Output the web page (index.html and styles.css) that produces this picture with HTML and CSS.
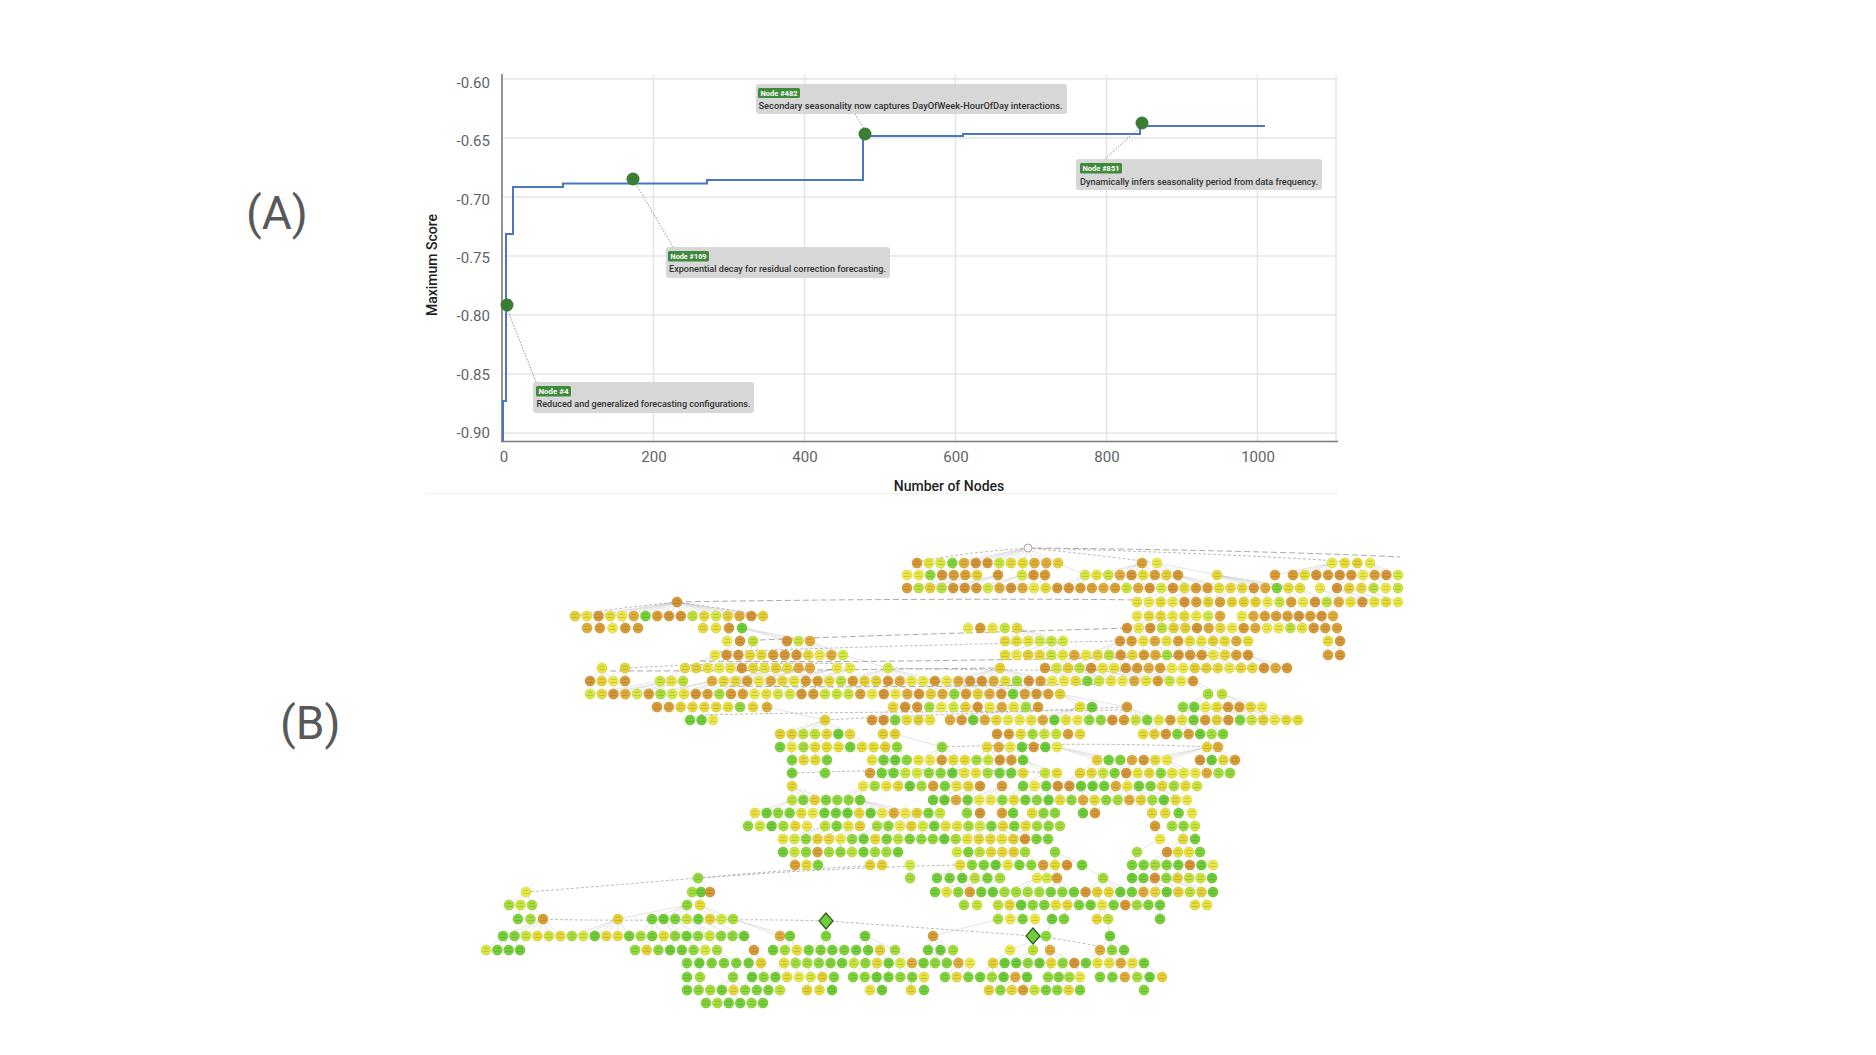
FILE: index.html
```html
<!DOCTYPE html>
<html lang="en">
<head>
<meta charset="utf-8">
<title>Search progress</title>
<link rel="stylesheet" href="styles.css">
</head>
<body>
<main class="figure">
  <section class="panel panel-a">
    <div class="panel-label label-a">(A)</div>
    <svg class="chart" viewBox="420 60 920 440" width="920" height="440" role="img" aria-label="Maximum Score versus Number of Nodes">
      <g class="grid">
        <line x1="502" y1="79" x2="1336" y2="79"/>
        <line x1="502" y1="138" x2="1336" y2="138"/>
        <line x1="502" y1="197" x2="1336" y2="197"/>
        <line x1="502" y1="256" x2="1336" y2="256"/>
        <line x1="502" y1="315" x2="1336" y2="315"/>
        <line x1="502" y1="374" x2="1336" y2="374"/>
        <line x1="502" y1="433" x2="1336" y2="433"/>
        <line x1="653.5" y1="75" x2="653.5" y2="441"/>
        <line x1="804.5" y1="75" x2="804.5" y2="441"/>
        <line x1="955.5" y1="75" x2="955.5" y2="441"/>
        <line x1="1106.5" y1="75" x2="1106.5" y2="441"/>
        <line x1="1257.5" y1="75" x2="1257.5" y2="441"/>
        <line x1="1336" y1="75" x2="1336" y2="441"/>
      </g>
      <line class="axis" x1="502" y1="74" x2="502" y2="442"/>
      <line class="axis" x1="501" y1="441.5" x2="1338" y2="441.5"/>
      <g class="tick ytick">
        <text x="490" y="88">-0.60</text>
        <text x="490" y="145.5">-0.65</text>
        <text x="490" y="204.5">-0.70</text>
        <text x="490" y="262.5">-0.75</text>
        <text x="490" y="321">-0.80</text>
        <text x="490" y="379.5">-0.85</text>
        <text x="490" y="437.5">-0.90</text>
      </g>
      <g class="tick xtick">
        <text x="504" y="462">0</text>
        <text x="654" y="462">200</text>
        <text x="805" y="462">400</text>
        <text x="956" y="462">600</text>
        <text x="1107" y="462">800</text>
        <text x="1258" y="462">1000</text>
      </g>
      <text class="axis-title" x="949" y="491" text-anchor="middle">Number of Nodes</text>
      <text class="axis-title" transform="translate(437 265) rotate(-90)" text-anchor="middle">Maximum Score</text>
      <line class="sep" x1="425" y1="493.5" x2="1338" y2="493.5"/>
      <path class="series" d="M503 441 V401 H506 V234 H513 V187 H563 V183.5 H707 V180 H863 V136 H963 V134 H1140 V126 H1265"/>
      <g class="leaders">
        <line class="leader" x1="508" y1="311" x2="536" y2="382"/>
        <line class="leader" x1="636" y1="184" x2="673" y2="247"/>
        <line class="leader" x1="855" y1="114" x2="864" y2="129"/>
        <line class="leader" x1="1139" y1="128" x2="1105" y2="159"/>
      </g>
      <circle class="milestone" cx="507" cy="305" r="6.5"/>
      <circle class="milestone" cx="633" cy="179" r="6.5"/>
      <circle class="milestone" cx="865" cy="134" r="6.5"/>
      <circle class="milestone" cx="1142" cy="123" r="6.5"/>
      <g class="note">
        <rect class="note-box" x="533" y="382" width="221" height="31" rx="3"/>
        <rect class="badge" x="536" y="386" width="35" height="10.5" rx="1.5"/>
        <text class="badge-text" x="538.5" y="393.8" textLength="30" lengthAdjust="spacingAndGlyphs">Node #4</text>
        <text class="note-text" x="536.5" y="407" textLength="214" lengthAdjust="spacingAndGlyphs">Reduced and generalized forecasting configurations.</text>
      </g>
      <g class="note">
        <rect class="note-box" x="666" y="247" width="224" height="31" rx="3"/>
        <rect class="badge" x="668" y="251" width="41" height="10.5" rx="1.5"/>
        <text class="badge-text" x="670.5" y="258.8" textLength="36" lengthAdjust="spacingAndGlyphs">Node #169</text>
        <text class="note-text" x="669" y="272" textLength="217" lengthAdjust="spacingAndGlyphs">Exponential decay for residual correction forecasting.</text>
      </g>
      <g class="note">
        <rect class="note-box" x="756" y="84" width="311" height="30" rx="3"/>
        <rect class="badge" x="758" y="88" width="42" height="10" rx="1.5"/>
        <text class="badge-text" x="760.5" y="95.6" textLength="37" lengthAdjust="spacingAndGlyphs">Node #482</text>
        <text class="note-text" x="758.5" y="109" textLength="304" lengthAdjust="spacingAndGlyphs">Secondary seasonality now captures DayOfWeek-HourOfDay interactions.</text>
      </g>
      <g class="note">
        <rect class="note-box" x="1076" y="159" width="246" height="31" rx="3"/>
        <rect class="badge" x="1080" y="163" width="42" height="10.5" rx="1.5"/>
        <text class="badge-text" x="1082.5" y="170.8" textLength="37" lengthAdjust="spacingAndGlyphs">Node #851</text>
        <text class="note-text" x="1080" y="185" textLength="238" lengthAdjust="spacingAndGlyphs">Dynamically infers seasonality period from data frequency.</text>
      </g>
    </svg>
  </section>
  <section class="panel panel-b">
    <div class="panel-label label-b">(B)</div>
    <svg id="tree" class="tree" viewBox="470 540 940 480" width="940" height="480" role="img" aria-label="Search tree"></svg>
  </section>
</main>
<script src="script.js"></script>
</body>
</html>
```

FILE: styles.css
```css
html, body {
  margin: 0;
  padding: 0;
  background: #ffffff;
}

body {
  width: 1876px;
  height: 1055px;
  overflow: hidden;
  font-family: Roboto, "Liberation Sans", Arial, sans-serif;
}

.figure {
  display: flex;
  flex-direction: column;
}

.panel {
  display: grid;
  align-items: start;
}

.panel-a {
  grid-template-columns: 420px 920px;
  height: 500px;
}

.panel-b {
  grid-template-columns: 470px 940px;
  height: 555px;
}

.panel-label {
  font-size: 46px;
  line-height: 46px;
  font-weight: 400;
  color: #595959;
}

.label-a {
  padding-left: 246px;
  margin-top: 190px;
}

.label-b {
  padding-left: 280px;
  margin-top: 200px;
}

.chart {
  display: block;
  margin-top: 60px;
  font-family: Roboto, "Liberation Sans", Arial, sans-serif;
}

.chart .grid line {
  stroke: #e4e4e4;
  stroke-width: 1.5;
}

.chart .axis {
  stroke: #7a7a7a;
  stroke-width: 1.6;
}

.chart .tick {
  font-size: 15px;
  fill: #5f6368;
}

.chart .ytick {
  text-anchor: end;
}

.chart .xtick {
  text-anchor: middle;
}

.chart .axis-title {
  font-size: 14px;
  font-weight: 500;
  fill: #1f1f1f;
}

.chart .sep {
  stroke: #f1f1f1;
  stroke-width: 1.5;
}

.chart .series {
  fill: none;
  stroke: #4a76c2;
  stroke-width: 2;
}

.chart .leader {
  stroke: #8a8a8a;
  stroke-width: 0.9;
  stroke-dasharray: 1.5 1.5;
}

.chart .milestone {
  fill: #3b7d33;
}

.chart .note-box {
  fill: #d7d7d7;
}

.chart .badge {
  fill: #3f8b3c;
}

.chart .badge-text {
  font-size: 7.5px;
  font-weight: 700;
  fill: #ffffff;
}

.chart .note-text {
  font-size: 9px;
  font-weight: 500;
  fill: #333333;
}

.tree {
  display: block;
  margin-top: 40px;
}

.tree .edge {
  stroke: #c6c6c6;
  stroke-width: 0.5;
  fill: none;
}

.tree .link {
  stroke: #ababab;
  stroke-width: 0.8;
  stroke-dasharray: 3 2;
  fill: none;
}

.tree .link-dark {
  stroke: #777777;
  stroke-width: 0.9;
  stroke-dasharray: 6 3;
  fill: none;
  opacity: 0.7;
}

.tree .node {
  stroke: rgba(120, 100, 0, 0.18);
  stroke-width: 0.6;
}

.tree .mark {
  fill: rgba(80, 70, 20, 0.26);
}

.tree .diamond {
  fill: #72cc3a;
  stroke: #2f5a22;
  stroke-width: 1.2;
}

.tree .root {
  fill: #f4f4f4;
  stroke: #9a9a9a;
  stroke-width: 0.8;
}
```

FILE: script.js
```js
(function () {
  var NS = 'http://www.w3.org/2000/svg';
  var svg = document.getElementById('tree');
  var PITCH = 11.7;

  var rows = [
    [563, [[917, 1058], [1142, 1157], [1332, 1370]]],
    [575, [[907, 977], [998, 998], [1022, 1045], [1085, 1178], [1217, 1217], [1275, 1275], [1293, 1398]]],
    [588, [[907, 1300], [1320, 1320], [1337, 1398]]],
    [602, [[677, 677], [1137, 1398]]],
    [616, [[575, 763], [1137, 1220], [1242, 1333]]],
    [628, [[587, 638], [703, 742], [968, 1017], [1127, 1337]]],
    [641, [[727, 753], [787, 810], [1005, 1063], [1120, 1248], [1328, 1340]]],
    [655, [[715, 843], [1005, 1248], [1328, 1340]]],
    [668, [[602, 602], [625, 625], [685, 810], [837, 850], [888, 888], [1000, 1000], [1045, 1287]]],
    [681, [[590, 625], [660, 683], [712, 1193]]],
    [694, [[590, 1060], [1208, 1222]]],
    [707, [[657, 740], [753, 767], [893, 1038], [1080, 1092], [1127, 1127], [1183, 1262]]],
    [720, [[690, 713], [825, 825], [872, 930], [950, 1298]]],
    [734, [[780, 850], [883, 895], [997, 1080], [1143, 1223]]],
    [747, [[780, 897], [942, 942], [987, 1057], [1207, 1218]]],
    [760, [[792, 827], [872, 1023], [1097, 1167], [1200, 1235]]],
    [773, [[792, 792], [825, 825], [870, 1023], [1045, 1057], [1080, 1230]]],
    [786, [[792, 792], [863, 980], [1002, 1002], [1023, 1197]]],
    [800, [[792, 860], [933, 1187]]],
    [813, [[755, 940], [967, 980], [1002, 1013], [1032, 1055], [1083, 1095], [1152, 1192]]],
    [826, [[748, 807], [825, 860], [877, 1060], [1155, 1155], [1172, 1195]]],
    [839, [[783, 1048], [1160, 1160], [1183, 1195]]],
    [852, [[783, 898], [957, 1025], [1055, 1055], [1137, 1137], [1167, 1200]]],
    [865, [[795, 818], [870, 882], [910, 910], [960, 1067], [1082, 1082], [1132, 1213]]],
    [878, [[698, 698], [910, 910], [937, 1000], [1037, 1057], [1103, 1103], [1132, 1212]]],
    [892, [[526, 526], [692, 710], [935, 1213]]],
    [905, [[509, 532], [687, 700], [964, 977], [998, 1160], [1195, 1207]]],
    [919, [[518, 543], [618, 618], [652, 733], [998, 1035], [1052, 1064], [1097, 1108], [1160, 1160]]],
    [936, [[503, 744], [780, 790], [826, 826], [865, 865], [933, 933], [1046, 1046], [1110, 1110]]],
    [950, [[486, 520], [635, 717], [754, 754], [773, 880], [895, 895], [928, 953], [1010, 1010], [1033, 1033], [1050, 1050], [1100, 1124]]],
    [963, [[687, 761], [784, 970], [993, 1144]]],
    [977, [[687, 700], [733, 733], [752, 834], [853, 924], [945, 1027], [1048, 1080], [1100, 1162]]],
    [990, [[687, 780], [807, 832], [870, 882], [911, 924], [989, 1080], [1144, 1144]]],
    [1003, [[706, 763]]]
  ];

  var longLinks = [
    ['link-dark', 'M1028 548 C1150 549 1300 552 1400 557'],
    ['link', 'M1028 548 C985 551 945 556 917 562'],
    ['link', 'M1028 548 C1080 553 1120 558 1150 562'],
    ['link', 'M1028 548 C1180 552 1300 558 1350 562'],
    ['link-dark', 'M677 602 C780 600 1000 598 1140 600'],
    ['link', 'M677 602 C640 606 600 610 575 616'],
    ['link', 'M677 602 C700 606 740 610 763 616'],
    ['link-dark', 'M760 640 C850 636 1000 632 1130 628'],
    ['link', 'M720 652 C820 648 960 644 1120 641'],
    ['link-dark', 'M700 661 C850 663 1000 660 1240 655'],
    ['link', 'M625 668 C700 664 780 662 850 664'],
    ['link-dark', 'M610 671 C760 671 900 669 1000 668'],
    ['link', 'M890 668 C980 670 1100 672 1287 668'],
    ['link-dark', 'M720 686 C850 688 980 686 1100 684'],
    ['link', 'M700 715 C820 712 940 712 1130 710'],
    ['link', 'M826 720 C900 716 1000 712 1127 707'],
    ['link', 'M942 747 C1000 745 1100 742 1210 747'],
    ['link', 'M792 773 C880 770 980 768 1050 773'],
    ['link', 'M698 878 C760 872 820 868 868 866'],
    ['link', 'M526 892 C580 888 650 882 698 878'],
    ['link', 'M826 921 C900 926 980 932 1033 936'],
    ['link', 'M540 919 C620 922 740 918 826 921'],
    ['link', 'M1033 936 C1070 940 1100 946 1112 950'],
    ['link', 'M702 878 C800 870 900 866 960 865']
  ];

  var seed = 1234567;
  function rnd() {
    seed = (seed * 16807) % 2147483647;
    return (seed - 1) / 2147483646;
  }
  function choose(list) {
    return list[Math.floor(rnd() * list.length)];
  }

  var GREENS = ['#7ed63c', '#6ccf3a', '#8fdb3e', '#a5e03e', '#74d23b'];
  var ORANGES = ['#dca23a', '#d8993a', '#e1ad3e', '#da9e36', '#d69538'];
  var YELLOWS = ['#e6df38', '#ece94a', '#e6d236', '#e9e43f', '#e8da3c'];
  var YGS = ['#cbe63e', '#bfe23d', '#d6ea45'];

  function pick(x, y) {
    var g;
    if (y < 690) g = 0.03;
    else if (y < 760) g = 0.12 + (y - 690) / 70 * 0.2;
    else if (y < 860) g = 0.4 + (y - 760) / 100 * 0.15;
    else g = 0.62;
    if (x < 770 && y > 860) g = 0.72;
    if (rnd() < g) return choose(GREENS);
    var o = y < 600 ? 0.5 : (y < 700 ? 0.42 : (y < 800 ? 0.33 : 0.22));
    var r2 = rnd();
    if (r2 < o) return choose(ORANGES);
    if (r2 < o + (1 - o) * 0.75) return choose(YELLOWS);
    return choose(YGS);
  }

  function el(name, attrs, parent) {
    var e = document.createElementNS(NS, name);
    for (var k in attrs) e.setAttribute(k, attrs[k]);
    parent.appendChild(e);
    return e;
  }

  var gEdges = el('g', { 'class': 'edges' }, svg);
  var gLinks = el('g', { 'class': 'links' }, svg);
  var gNodes = el('g', { 'class': 'nodes' }, svg);

  longLinks.forEach(function (l) {
    el('path', { 'class': l[0], d: l[1] }, gLinks);
  });

  var prev = [{ x: 1028, y: 548 }];
  rows.forEach(function (row) {
    var y = row[0];
    var cur = [];
    row[1].forEach(function (run) {
      var a = run[0], b = run[1];
      var n = Math.max(1, Math.round((b - a) / PITCH) + 1);
      var step = n > 1 ? (b - a) / (n - 1) : 0;
      var center = (a + b) / 2;
      for (var i = 0; i < n; i++) {
        var x = a + i * step;
        cur.push({ x: x, y: y, c: center });
      }
    });
    cur.forEach(function (nd) {
      var target = nd.x * 0.7 + nd.c * 0.3;
      var best = null, bd = 1e9;
      prev.forEach(function (p) {
        var d = Math.abs(p.x - target);
        if (d < bd) { bd = d; best = p; }
      });
      if (best && bd < 70 && nd.y - best.y < 30) {
        el('line', { 'class': 'edge', x1: best.x.toFixed(1), y1: best.y, x2: nd.x.toFixed(1), y2: nd.y }, gEdges);
      }
    });
    cur.forEach(function (nd) {
      el('circle', { 'class': 'node', cx: nd.x.toFixed(1), cy: nd.y, r: 5.2, fill: pick(nd.x, nd.y) }, gNodes);
      el('rect', { 'class': 'mark', x: (nd.x - 2.6).toFixed(1), y: nd.y - 2.2, width: 5.2, height: 0.9 }, gNodes);
      el('rect', { 'class': 'mark', x: (nd.x - 3.2).toFixed(1), y: nd.y + 0.9, width: 6.4, height: 0.9 }, gNodes);
    });
    prev = cur;
  });

  el('circle', { 'class': 'root', cx: 1028, cy: 548, r: 4 }, gNodes);
  el('path', { 'class': 'diamond', d: 'M826 913 L833 921 L826 929 L819 921 Z' }, gNodes);
  el('path', { 'class': 'diamond', d: 'M1033 928 L1040 936 L1033 944 L1026 936 Z' }, gNodes);
})();
```
